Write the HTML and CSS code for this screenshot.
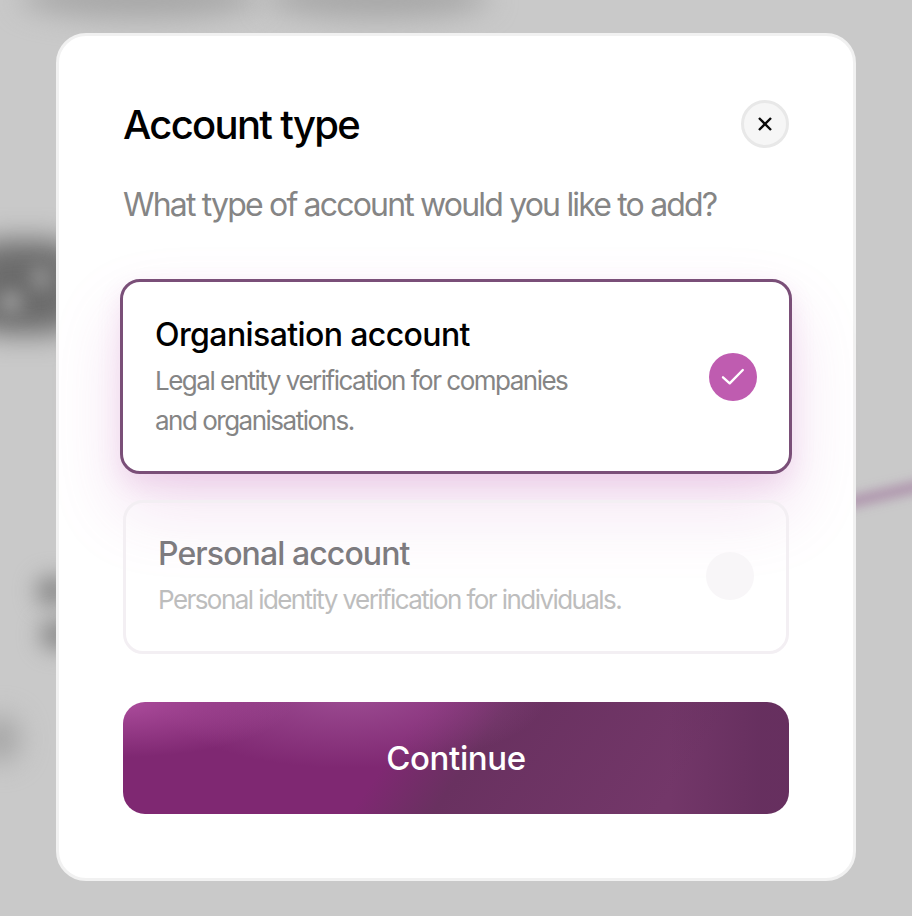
FILE: index.html
```html
<!DOCTYPE html>
<html lang="en">
<head>
    <meta charset="UTF-8">
    <meta name="viewport" content="width=device-width, initial-scale=1.0">
    <title>Account type</title>
    <link rel="stylesheet" href="styles.css">
</head>
<body>
    <!-- blurred page behind the dialog -->
    <div class="backdrop">
        <div class="blob blob-top-one"></div>
        <div class="blob blob-top-two"></div>
        <div class="blob blob-heading"></div>
        <div class="blob blob-heading-gap-one"></div>
        <div class="blob blob-heading-gap-two"></div>
        <div class="blob blob-dot-one"></div>
        <div class="blob blob-dot-two"></div>
        <div class="blob blob-dot-three"></div>
        <div class="blob blob-line"></div>
    </div>

    <div class="overlay">
        <div class="modal">
            <div class="modal-header">
                <h1>Account type</h1>
                <button class="close-btn" aria-label="Close">
                    <svg width="16" height="16" viewBox="0 0 16 16">
                        <path d="M2 2L14 14M14 2L2 14" stroke="#0a0a0a" stroke-width="2.4" fill="none"/>
                    </svg>
                </button>
            </div>
            <p class="subtitle">What type of account would you like to add?</p>

            <div class="option option-selected">
                <div class="option-text">
                    <h3>Organisation account</h3>
                    <p>Legal entity verification for companies<br>and organisations.</p>
                </div>
                <div class="check">
                    <svg width="24" height="24" viewBox="0 0 24 24">
                        <path d="M2 12.3L8.7 18.3L21.8 5" stroke="#fff" stroke-width="2.4" stroke-linecap="round" stroke-linejoin="round" fill="none"/>
                    </svg>
                </div>
            </div>

            <div class="option option-muted">
                <div class="option-text">
                    <h3>Personal account</h3>
                    <p>Personal identity verification for individuals.</p>
                </div>
                <div class="check check-empty"></div>
            </div>

            <button class="continue-btn">Continue</button>
        </div>
    </div>
</body>
</html>
```

FILE: styles.css
```css
* {
    margin: 0;
    padding: 0;
    box-sizing: border-box;
}

html, body {
    height: 916px;
    overflow: hidden;
}

body {
    font-family: Inter, 'Noto Sans', sans-serif;
    background: #c9c9c9;
    position: relative;
}

.backdrop {
    position: absolute;
    inset: 0;
    overflow: hidden;
}

.blob {
    position: absolute;
    border-radius: 50%;
    background: #8f8f8f;
    filter: blur(14px);
}

.blob-top-one {
    left: 20px;
    top: -22px;
    width: 240px;
    height: 40px;
    background: #a6a6a6;
}

.blob-top-two {
    left: 265px;
    top: -22px;
    width: 225px;
    height: 40px;
    background: #a6a6a6;
}

.blob-heading {
    left: -30px;
    top: 240px;
    width: 110px;
    height: 94px;
    border-radius: 30px;
    background: #6c6c6c;
}

.blob-heading-gap-one {
    left: 32px;
    top: 266px;
    width: 18px;
    height: 24px;
    background: #989898;
    filter: blur(9px);
}

.blob-heading-gap-two {
    left: 0;
    top: 292px;
    width: 22px;
    height: 20px;
    background: #a4a4a4;
    filter: blur(9px);
}

.blob-dot-one {
    left: 36px;
    top: 576px;
    width: 36px;
    height: 30px;
    background: #858585;
    filter: blur(11px);
}

.blob-dot-two {
    left: 40px;
    top: 620px;
    width: 36px;
    height: 30px;
    background: #858585;
    filter: blur(11px);
}

.blob-dot-three {
    left: -22px;
    top: 716px;
    width: 42px;
    height: 46px;
    background: #a4a4a4;
}

.blob-line {
    left: 830px;
    top: 489px;
    width: 110px;
    height: 10px;
    border-radius: 0;
    background: #a98aa7;
    transform: rotate(-13deg);
    filter: blur(6px);
}

.overlay {
    position: relative;
    padding: 33px 56px 35px;
}

.modal {
    height: 848px;
    background: white;
    border: 3px solid #f1f1f1;
    border-radius: 30px;
    padding: 64px 64px 0;
}

.modal-header {
    display: flex;
    justify-content: space-between;
    align-items: center;
    height: 48px;
}

.modal-header h1 {
    font-size: 40px;
    font-weight: 500;
    letter-spacing: -1.7px;
    color: #000;
}

.close-btn {
    width: 48px;
    height: 48px;
    border-radius: 50%;
    background: #f6f6f6;
    border: 3px solid #e8e8e8;
    display: flex;
    align-items: center;
    justify-content: center;
}

.subtitle {
    margin-top: 33px;
    font-size: 32px;
    line-height: 48px;
    letter-spacing: -1.82px;
    color: #858585;
}

.option {
    display: flex;
    justify-content: space-between;
    align-items: center;
    border-radius: 20px;
    padding: 0 32px;
}

.option-selected {
    margin: 50px -3px 0;
    height: 195px;
    background: white;
    border: 3px solid #7a4f78;
    box-shadow: 0 36px 70px rgba(190, 90, 180, 0.2), 0 10px 24px rgba(190, 90, 180, 0.14);
}

.option-muted {
    margin-top: 26px;
    height: 154px;
    border: 3px solid #f3eff3;
    background: rgba(255, 255, 255, 0.2);
}

.option h3 {
    font-size: 32px;
    line-height: 44px;
    font-weight: 500;
    letter-spacing: -0.6px;
    color: #000;
}

.option p {
    margin-top: 4px;
    font-size: 26px;
    line-height: 40px;
    letter-spacing: -1.5px;
    color: #858585;
}

.option-muted .option-text {
    padding-bottom: 2px;
}

.option-muted h3 {
    letter-spacing: -0.9px;
    color: #7d7b7f;
}

.option-muted p {
    letter-spacing: -1.57px;
    color: #bdbdbd;
}

.check {
    width: 48px;
    height: 48px;
    border-radius: 50%;
    background: #bf5cb0;
    display: flex;
    align-items: center;
    justify-content: center;
    flex-shrink: 0;
}

.check-empty {
    margin-top: -2px;
    background: #f8f6f8;
}

.continue-btn {
    display: block;
    width: 100%;
    height: 112px;
    margin-top: 48px;
    border: none;
    border-radius: 22px;
    font-family: inherit;
    font-size: 33px;
    font-weight: 500;
    letter-spacing: -0.4px;
    color: white;
    background:
        radial-gradient(ellipse 170px 55px at 0% 0%, rgba(176, 80, 160, 0.9) 0%, rgba(176, 80, 160, 0) 100%),
        radial-gradient(ellipse 200px 75px at 34% -8%, rgba(160, 80, 150, 0.9) 0%, rgba(160, 80, 150, 0) 100%),
        linear-gradient(90deg, rgba(90, 40, 85, 0) 82%, rgba(90, 40, 85, 0.5) 96%),
        linear-gradient(125deg, #7f2872 0%, #7f2872 41%, #693160 52%, #733769 82%);
}
```
